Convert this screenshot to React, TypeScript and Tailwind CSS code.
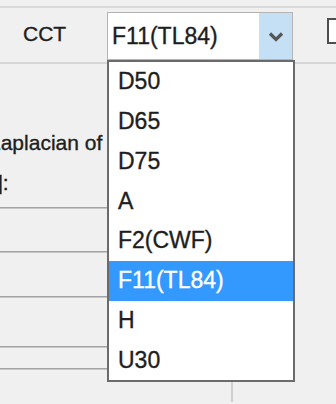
import React from 'react';

const options = ['D50', 'D65', 'D75', 'A', 'F2(CWF)', 'F11(TL84)', 'H', 'U30'];
const selected = 'F11(TL84)';

const Rule = ({ className = '' }: { className?: string }) => (
  <div className={`h-[2px] border-t border-t-[#a3a3a3] border-b border-b-[#c6c6c6] ${className}`} />
);

const App = () => {
  return (
    <div className="relative w-[336px] h-[404px] overflow-hidden bg-[#f0f0f0] text-[#1e1e1e] font-['Liberation_Sans',Arial,sans-serif] [-webkit-text-stroke:0.35px_currentColor]">
      <div className="mt-[6px] h-[2px] bg-[#d9d9d9]" />

      {/* header row */}
      <div className="flex h-[54px] items-start">
        <div className="shrink-0 w-[107px] h-[52px] flex items-center pl-[23px] text-[21px]">CCT</div>
        <div className="shrink-0 mt-[4px] w-[186px] h-[48px] flex border border-[#b4b4b4] bg-white">
          <div className="flex-1 flex items-center pl-[4px] text-[23px] leading-none">{selected}</div>
          <div className="w-[33px] flex items-center justify-center bg-[#c5e0f5]">
            <svg width="16" height="11" viewBox="0 0 16 11">
              <path d="M2 2.5 L8 8.5 L14 2.5" fill="none" stroke="#555" strokeWidth="3.2" />
            </svg>
          </div>
        </div>
        <div className="shrink-0 ml-[34px] mt-[10px] w-[26px] h-[26px] border-2 border-[#4e4e4e] bg-white" />
      </div>

      <div className="h-[2px] bg-[#d6d6d6]" />

      {/* body */}
      <div className="flex h-[338px]">
        <div className="shrink-0 w-[231px] flex flex-col">
          <div className="mt-[59px] h-[80px] overflow-hidden text-[21px] leading-[40px] whitespace-nowrap">
            <div className="-ml-[11px]">Laplacian of</div>
            <div className="-ml-[3px]">]:</div>
          </div>
          <Rule className="mt-[4px]" />
          <Rule className="mt-[42px]" />
          <Rule className="mt-[43px]" />
          <Rule className="mt-[48px]" />
          <Rule className="mt-[20px]" />
        </div>
        <div className="shrink-0 w-[2px] bg-[#cfcfcf]" />
        <div className="flex-1" />
      </div>

      {/* open dropdown list */}
      <div className="absolute left-[107px] top-[60px] w-[188px] border-2 border-[#6b6b6b] bg-white">
        {options.map((o) => (
          <div
            key={o}
            className={`h-[39.75px] flex items-center pl-[9px] text-[23px] leading-none ${
              o === selected ? 'bg-[#3399ff] text-white' : ''
            }`}
          >
            {o}
          </div>
        ))}
      </div>
    </div>
  );
};

export default App;
